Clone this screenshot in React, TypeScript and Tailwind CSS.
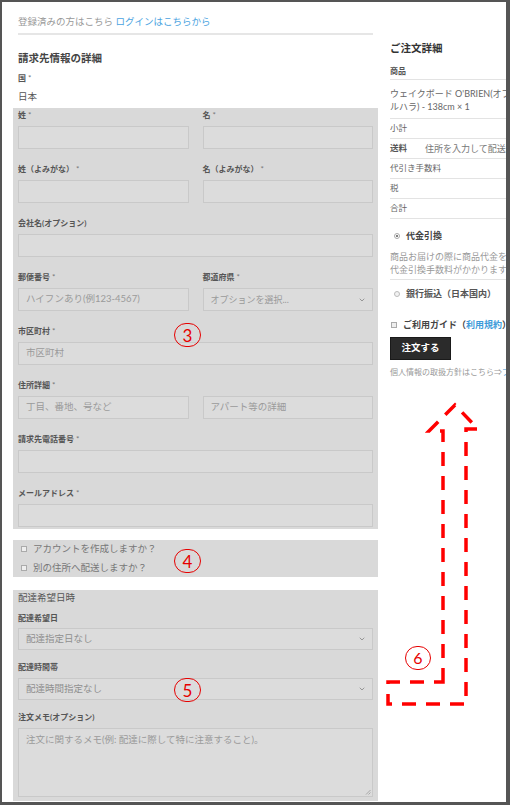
import { ChevronDown } from 'lucide-react'

function Label({ text, req = true }: { text: string; req?: boolean }) {
  return (
    <div className="text-[8px] leading-[10px] font-bold text-[#555] mb-[6px] whitespace-nowrap">
      {text}
      {req && <span className="text-[#777] font-normal"> *</span>}
    </div>
  )
}

function Input({ placeholder }: { placeholder?: string }) {
  return (
    <div className="h-[23px] border border-[#c9c9c9] bg-[#dcdcdc] px-[7px] flex items-center text-[9.5px] text-[#9a9a9a] whitespace-nowrap overflow-hidden">
      {placeholder}
    </div>
  )
}

function Select({ value }: { value: string }) {
  return (
    <div className="h-[22px] border border-[#c9c9c9] bg-[#dcdcdc] pl-[7px] pr-[6px] flex items-center justify-between text-[9.5px] text-[#8f8f8f] whitespace-nowrap">
      <span>{value}</span>
      <ChevronDown size={8} strokeWidth={2.5} className="text-[#888]" />
    </div>
  )
}

function Check() {
  return <span className="w-[6px] h-[6px] border border-[#aaa] bg-[#eee] shrink-0" />
}

export default function App() {
  return (
    <div className="w-[510px] h-[805px] bg-white border-l-2 border-t-2 border-r-4 border-b-[3px] border-[#555] relative overflow-hidden font-['Lato','Noto_Sans_CJK_JP',sans-serif]">
      <div className="flex h-full">
        {/* LEFT: billing form */}
        <div className="w-[365px] ml-[11px] shrink-0 pt-[14px]">
          <div className="px-[5px]">
            <div className="text-[9.5px] leading-[12px] text-[#999] whitespace-nowrap">
              登録済みの方はこちら <span className="text-[#4aa3df]">ログインはこちらから</span>
            </div>
            <div className="h-[2px] bg-[#e6e6e6] mt-[5px]" />
            <div className="mt-[16px] text-[10.5px] leading-[14px] font-bold text-[#444]">請求先情報の詳細</div>
            <div className="mt-[8px] text-[8px] leading-[10px] font-bold text-[#555]">
              国<span className="text-[#777] font-normal"> *</span>
            </div>
            <div className="mt-[8px] text-[9.5px] leading-[12px] text-[#555]">日本</div>
          </div>

          <div className="mt-[5px] bg-[#d9d9d9] px-[5px] pt-[2px] pb-[2px] flex flex-col gap-[15px]">
            <div className="grid grid-cols-2 gap-x-[14px]">
              <div>
                <Label text="姓" />
                <Input />
              </div>
              <div>
                <Label text="名" />
                <Input />
              </div>
            </div>
            <div className="grid grid-cols-2 gap-x-[14px]">
              <div>
                <Label text="姓（よみがな）" />
                <Input />
              </div>
              <div>
                <Label text="名（よみがな）" />
                <Input />
              </div>
            </div>
            <div>
              <Label text="会社名(オプション)" req={false} />
              <Input />
            </div>
            <div className="grid grid-cols-2 gap-x-[14px]">
              <div>
                <Label text="郵便番号" />
                <Input placeholder="ハイフンあり(例123-4567)" />
              </div>
              <div>
                <Label text="都道府県" />
                <div className="h-[23px] border border-[#c9c9c9] bg-[#dcdcdc] pl-[7px] pr-[6px] flex items-center justify-between text-[9px] text-[#9a9a9a] whitespace-nowrap">
                  <span>オプションを選択...</span>
                  <ChevronDown size={8} strokeWidth={2.5} className="text-[#888]" />
                </div>
              </div>
            </div>
            <div>
              <Label text="市区町村" />
              <Input placeholder="市区町村" />
            </div>
            <div>
              <Label text="住所詳細" />
              <div className="grid grid-cols-2 gap-x-[14px]">
                <Input placeholder="丁目、番地、号など" />
                <Input placeholder="アパート等の詳細" />
              </div>
            </div>
            <div>
              <Label text="請求先電話番号" />
              <Input />
            </div>
            <div>
              <Label text="メールアドレス" />
              <Input />
            </div>
          </div>

          <div className="mt-[11px] bg-[#d9d9d9] pl-[8px] py-[3px] flex flex-col gap-[7px]">
            <div className="flex items-center gap-[6px] h-[12px] text-[9.5px] text-[#777]">
              <Check />
              <span>アカウントを作成しますか？</span>
            </div>
            <div className="flex items-center gap-[6px] h-[12px] text-[9.5px] text-[#777]">
              <Check />
              <span>別の住所へ配送しますか？</span>
            </div>
          </div>

          <div className="mt-[13px] bg-[#d9d9d9] px-[5px] pt-[2px] pb-[4px]">
            <div className="text-[9.5px] leading-[12px] text-[#555]">配達希望日時</div>
            <div className="mt-[9px] text-[8px] leading-[10px] font-bold text-[#555] mb-[5px]">配達希望日</div>
            <Select value="配達指定日なし" />
            <div className="mt-[12px] text-[8px] leading-[10px] font-bold text-[#555] mb-[6px]">配達時間帯</div>
            <Select value="配達時間指定なし" />
            <div className="mt-[12px] text-[8px] leading-[10px] font-bold text-[#555] mb-[6px]">注文メモ(オプション)</div>
            <div className="h-[69px] border border-[#c9c9c9] bg-[#dcdcdc] px-[7px] pt-[5px] text-[9.5px] leading-[12px] text-[#9a9a9a] relative whitespace-nowrap">
              注文に関するメモ(例: 配達に際して特に注意すること)。
              <svg className="absolute right-[1px] bottom-[1px]" width="6" height="6" viewBox="0 0 6 6">
                <path d="M5.5 1 L1 5.5 M5.5 3.5 L3.5 5.5" stroke="#999" strokeWidth="0.8" />
              </svg>
            </div>
          </div>
        </div>

        {/* RIGHT: order summary */}
        <div className="ml-[12px] w-[220px] shrink-0 pt-[39px] text-[#555]">
          <div className="text-[10.5px] leading-[14px] font-bold text-[#333]">ご注文詳細</div>
          <div className="mt-[11px] pb-[3px] border-b border-[#e3e3e3] text-[8px] leading-[10px] font-bold">商品</div>
          <div className="mt-[7px] pb-[5px] border-b border-[#e3e3e3] text-[9px] leading-[13px] text-[#666] whitespace-nowrap">
            <div>ウェイクボード O'BRIEN(オブライエン) システム</div>
            <div>ルハラ) - 138cm × 1</div>
          </div>
          <div className="h-[20px] flex items-center border-b border-[#e3e3e3] text-[8.5px] text-[#666]">小計</div>
          <div className="h-[20px] flex items-center border-b border-[#e3e3e3] text-[8.5px] whitespace-nowrap">
            <span className="w-[35px] font-bold text-[#555]">送料</span>
            <span className="text-[9px] text-[#777]">住所を入力して配送料を計算</span>
          </div>
          <div className="h-[20px] flex items-center border-b border-[#e3e3e3] text-[8.5px] text-[#666]">代引き手数料</div>
          <div className="h-[20px] flex items-center border-b border-[#e3e3e3] text-[8.5px] text-[#666]">税</div>
          <div className="h-[20px] flex items-center border-b border-[#e3e3e3] text-[8.5px] text-[#666]">合計</div>

          <div className="mt-[11px] flex items-center gap-[6px] h-[12px] pl-[4px] text-[9px] font-bold text-[#444]">
            <span className="w-[6px] h-[6px] rounded-full border border-[#aaa] bg-white flex items-center justify-center">
              <span className="w-[2px] h-[2px] rounded-full bg-[#555]" />
            </span>
            <span>代金引換</span>
          </div>
          <div className="mt-[8px] pb-[3px] border-b border-[#e3e3e3] text-[9px] leading-[13px] text-[#999] whitespace-nowrap">
            <div>商品お届けの際に商品代金をお支払いください。</div>
            <div>代金引換手数料がかかります。</div>
          </div>
          <div className="mt-[8px] flex items-center gap-[6px] h-[12px] pl-[4px] text-[9px] font-bold text-[#555]">
            <span className="w-[6px] h-[6px] rounded-full border border-[#bbb] bg-[#f2f2f2]" />
            <span>銀行振込（日本国内）</span>
          </div>
          <div className="mt-[19px] flex items-center gap-[6px] h-[12px] pl-[1px] text-[9px] font-bold text-[#444] whitespace-nowrap">
            <Check />
            <span>
              ご利用ガイド（<span className="text-[#3b9ad9]">利用規約</span>）
            </span>
          </div>
          <div className="mt-[6px] h-[23px] w-[61px] bg-[#2b2b2b] border border-[#1a1a1a] flex items-center justify-center text-[9.5px] font-bold text-white">
            注文する
          </div>
          <div className="mt-[7px] text-[8px] leading-[11px] text-[#999] whitespace-nowrap">
            個人情報の取扱方針はこちら⇒<span className="text-[#3b9ad9]">プライバシーポリシー</span>
          </div>
        </div>
      </div>

      {/* annotations */}
      <div className="absolute -left-[2px] -top-[2px] w-[510px] h-[805px] pointer-events-none">
        <svg className="absolute left-0 top-0" width="510" height="805" viewBox="0 0 510 805">
          <path
            d="M443 682 L443 431 L429 431 L455 405 L478 429 L466 429 L466 704 L388 704 L388 682 Z"
            fill="none"
            stroke="#ff0000"
            strokeWidth="3.5"
            strokeDasharray="14 10"
          />
        </svg>
        <div className="absolute left-[174px] top-[323px] w-[27px] h-[24px] rounded-full border-[1.5px] border-[#e60000] flex items-center justify-center text-[17px] leading-none text-[#e60000]">3</div>
        <div className="absolute left-[174px] top-[549px] w-[27px] h-[24px] rounded-full border-[1.5px] border-[#e60000] flex items-center justify-center text-[17px] leading-none text-[#e60000]">4</div>
        <div className="absolute left-[174px] top-[678px] w-[27px] h-[24px] rounded-full border-[1.5px] border-[#e60000] flex items-center justify-center text-[17px] leading-none text-[#e60000]">5</div>
        <div className="absolute left-[405px] top-[646px] w-[26px] h-[24px] rounded-full border border-[#e60000] flex items-center justify-center text-[16px] leading-none text-[#e60000]">6</div>
      </div>
    </div>
  )
}
